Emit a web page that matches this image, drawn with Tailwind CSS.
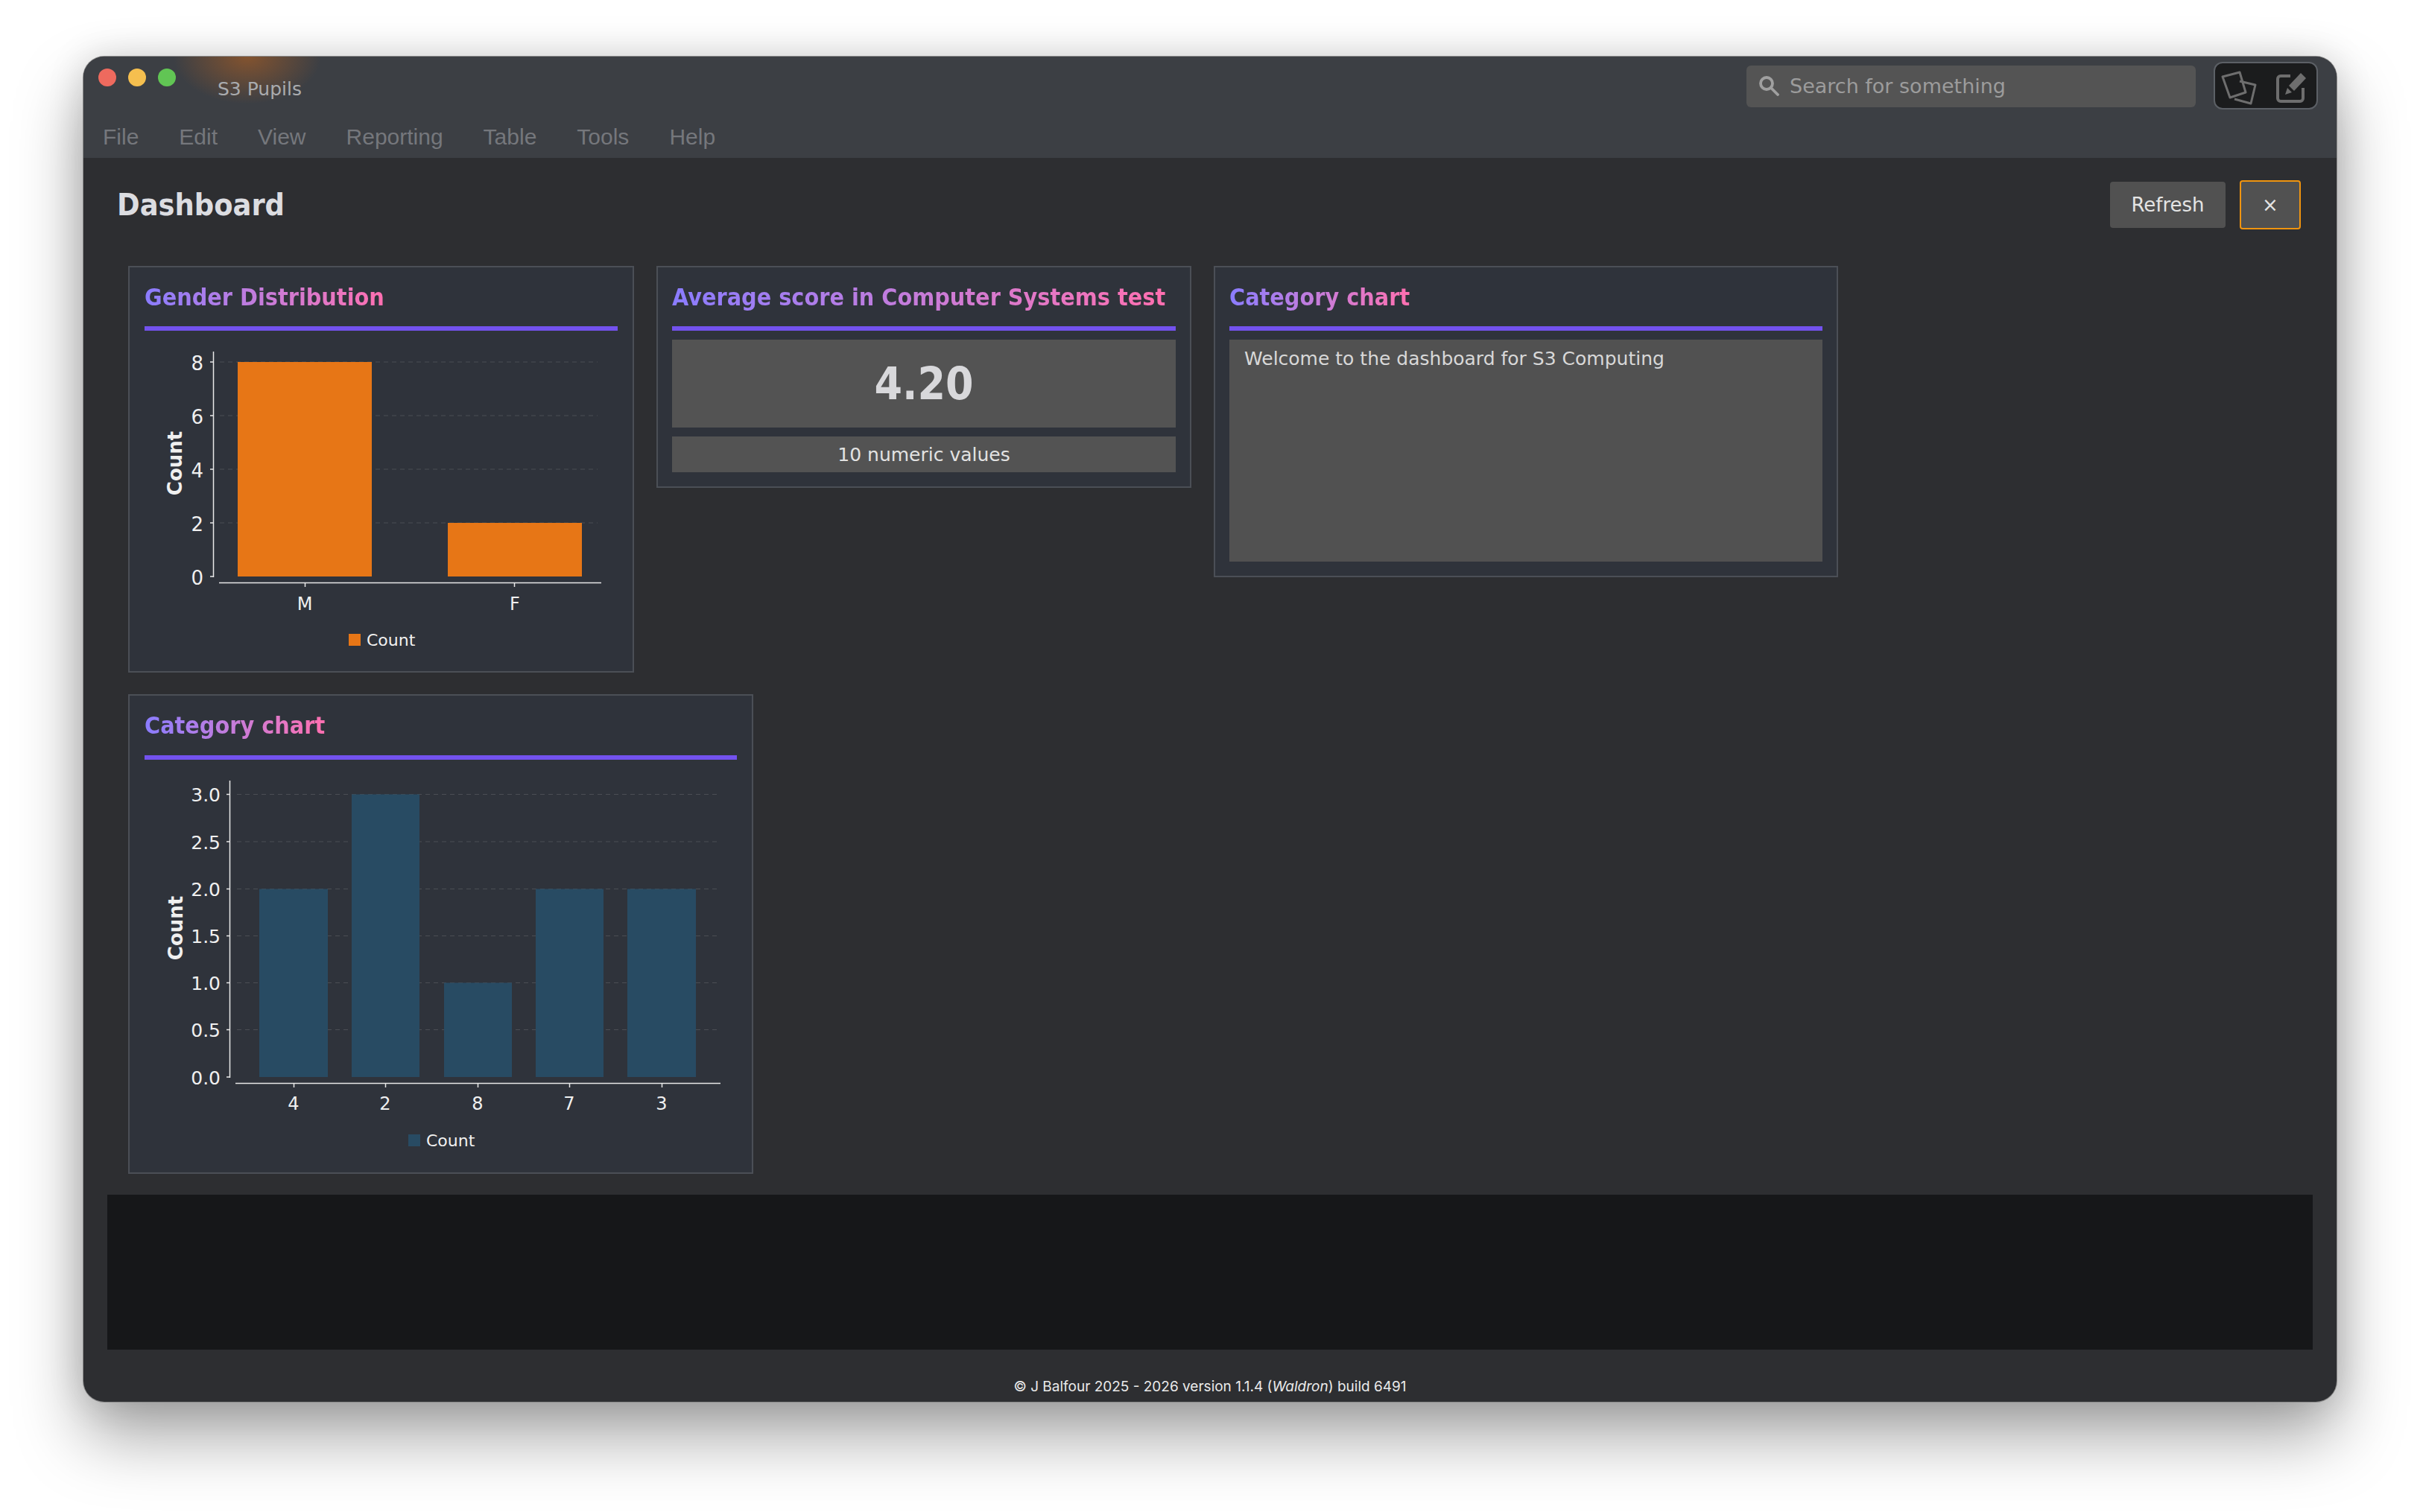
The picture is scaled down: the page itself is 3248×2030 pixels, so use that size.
<!DOCTYPE html>
<html lang="en">
<head>
  <meta charset="UTF-8">
  <title>S3 Pupils</title>
  <script src="https://cdn.jsdelivr.net/npm/@tailwindcss/browser@4"></script>
</head>
<body class="bg-white">
  <div class="h-[2030px] w-[3248px] overflow-hidden pl-[112px] pt-[76px] font-['DejaVu_Sans',sans-serif]">
    <div class="relative flex h-[1806px] w-[3024px] flex-col overflow-hidden rounded-[28px] bg-[#2d2e31] shadow-[0_0_0_1px_#8a8a8a,0_46px_90px_rgba(0,0,0,0.36),0_0_50px_rgba(0,0,0,0.14)]">

      <!-- Title bar and menu -->
      <div class="relative h-[136px] shrink-0 bg-[#3c3f44]">
        <div class="absolute left-[120px] top-0 h-[64px] w-[200px] bg-[radial-gradient(ellipse_at_50%_0%,rgba(190,100,30,0.55),rgba(190,100,30,0)_70%)]"></div>
        <div class="relative flex h-[72px] items-start">
          <div class="ml-[20px] mt-[16px] flex gap-[16px]">
            <div class="h-[24px] w-[24px] rounded-full bg-[#ee6a5e]"></div>
            <div class="h-[24px] w-[24px] rounded-full bg-[#f5bf4f]"></div>
            <div class="h-[24px] w-[24px] rounded-full bg-[#61c554]"></div>
          </div>
          <div class="ml-[56px] mt-[26px] text-[25px] leading-[36px] text-[#a9abae]">S3 Pupils</div>
          <div class="ml-auto mt-[12px] flex h-[56px] w-[603px] items-center gap-[14px] rounded-[6px] bg-[#545454] pl-[16px]">
            <svg class="-mt-[3px] h-[28px] w-[28px]" viewBox="0 0 28 28" fill="none" stroke="#a0a0a0" stroke-width="3.8">
              <circle cx="11" cy="11" r="8"/>
              <path d="M17 17l9 9" stroke-linecap="round"/>
            </svg>
            <span class="text-[27px] text-[#9c9c9c]">Search for something</span>
          </div>
          <div class="ml-[24px] mr-[25px] mt-[7px] flex h-[64px] w-[140px] items-center justify-between rounded-[12px] border-2 border-[#5c6066] bg-[#1b1c1d] pl-[8px] pr-[12px]">
            <svg class="h-[60px] w-[50px]" viewBox="0 0 50 60" fill="none" stroke="#6e6e6e" stroke-width="3" stroke-linejoin="round">
              <path d="M2 18l23-6 8 27-21 7z"/>
              <path d="M25 24l21 5-6 25-22-6"/>
            </svg>
            <svg class="h-[60px] w-[46px]" viewBox="0 0 46 60" fill="none" stroke="#6e6e6e" stroke-width="4" stroke-linejoin="round">
              <path d="M23 17H10a4 4 0 0 0-4 4v26a4 4 0 0 0 4 4h26a4 4 0 0 0 4-4V33"/>
              <path d="M37 13l7 7-16 17-7-7z" fill="#6e6e6e" stroke="none"/>
              <path d="M19 33l6 6-9 3z" fill="#6e6e6e" stroke="none"/>
            </svg>
          </div>
        </div>
        <nav class="relative ml-[26px] mt-[16px] flex gap-[54px] font-['Liberation_Sans',sans-serif] text-[30px] leading-[40px] text-[#75777c]">
          <span>File</span><span>Edit</span><span>View</span><span>Reporting</span><span>Table</span><span>Tools</span><span>Help</span>
        </nav>
      </div>

      <!-- Page header -->
      <div class="flex h-[126px] shrink-0 items-center justify-between pl-[45px] pr-[48px]">
        <h1 class="mt-[2px] text-[41px] font-bold font-stretch-condensed text-[#dcdde1]">Dashboard</h1>
        <div class="flex items-center gap-[19px]">
          <button class="h-[62px] w-[155px] rounded-[4px] bg-[#515151] text-[26px] text-[#e4e4e4]">Refresh</button>
          <button class="h-[66px] w-[82px] rounded-[4px] border-2 border-[#f0940f] bg-[#515151] text-[26px] text-[#e4e4e4]">×</button>
        </div>
      </div>

      <!-- Cards -->
      <div class="mt-[19px] flex flex-col gap-[29px] pl-[60px]">
        <div class="flex items-start gap-[30px]">
          <div class="h-[546px] w-[679px] border-2 border-[#4b4f56] bg-[#2f333b] px-[20px]">
            <h2 class="mt-[20px] h-[40px] whitespace-nowrap text-[32px] font-bold font-stretch-condensed leading-[40px]"><span class="bg-gradient-to-r from-[#8a7cff] to-[#ff6fb0] bg-clip-text text-transparent">Gender Distribution</span></h2>
            <div class="mt-[19px] h-[6px] bg-[#7352ee]"></div>
            <svg class="block" width="635" height="450" viewBox="194 444 635 450" font-size="26" fill="#f0f0f0">
              <path d="M295 486H802M295 558H802M295 630H802M295 702H802" stroke="#4b4e54" stroke-width="1" stroke-dasharray="6 5" fill="none"/>
              <g fill="#e77616">
                <rect x="319" y="486" width="180" height="288"/>
                <rect x="601" y="702" width="180" height="72"/>
              </g>
              <path d="M286.500 472V775M282 486H286M282 558H286M282 630H286M282 702H286M282 774H286M294 782.500H807M409.500 782V788M690.500 782V788" stroke="#e8e8e8" stroke-width="1.5" fill="none"/>
              <g text-anchor="end">
                <text x="273" y="497">8</text>
                <text x="273" y="569">6</text>
                <text x="273" y="641">4</text>
                <text x="273" y="713">2</text>
                <text x="273" y="785">0</text>
              </g>
              <g text-anchor="middle">
                <text x="409" y="819" font-size="24">M</text>
                <text x="691" y="819" font-size="24">F</text>
              </g>
              <text x="0" y="0" transform="translate(244 622) rotate(-90)" text-anchor="middle" font-size="26" font-weight="700">Count</text>
              <rect x="468" y="851" width="16" height="16" fill="#e77616"/>
              <text x="492" y="867" font-size="22">Count</text>
            </svg>
          </div>

          <div class="h-[298px] w-[718px] border-2 border-[#4b4f56] bg-[#2f333b] px-[19px]">
            <h2 class="mt-[20px] h-[40px] whitespace-nowrap text-[32px] font-bold font-stretch-condensed leading-[40px]"><span class="bg-gradient-to-r from-[#8a7cff] to-[#ff6fb0] bg-clip-text text-transparent">Average score in Computer Systems test</span></h2>
            <div class="mt-[19px] h-[6px] bg-[#7352ee]"></div>
            <div class="mt-[12px] flex h-[118px] items-center justify-center bg-[#535353] text-[60px] font-bold font-stretch-condensed text-[#d8d8db]">4.20</div>
            <div class="mt-[12px] flex h-[48px] items-center justify-center bg-[#535353] pt-[2px] text-[25px] text-[#e2e2e2]">10 numeric values</div>
          </div>

          <div class="h-[418px] w-[838px] border-2 border-[#4b4f56] bg-[#2f333b] px-[19px]">
            <h2 class="mt-[20px] h-[40px] whitespace-nowrap text-[32px] font-bold font-stretch-condensed leading-[40px]"><span class="bg-gradient-to-r from-[#8a7cff] to-[#ff6fb0] bg-clip-text text-transparent">Category chart</span></h2>
            <div class="mt-[19px] h-[6px] bg-[#7352ee]"></div>
            <div class="mt-[12px] h-[298px] bg-[#515151] px-[20px] pt-[8px] text-[25px] leading-[36px] text-[#d8d8d8]">Welcome to the dashboard for S3 Computing</div>
          </div>
        </div>

        <div class="h-[644px] w-[839px] border-2 border-[#4b4f56] bg-[#2f333b] px-[20px]">
          <h2 class="mt-[20px] h-[40px] whitespace-nowrap text-[32px] font-bold font-stretch-condensed leading-[40px]"><span class="bg-gradient-to-r from-[#8a7cff] to-[#ff6fb0] bg-clip-text text-transparent">Category chart</span></h2>
          <div class="mt-[20px] h-[6px] bg-[#7352ee]"></div>
          <svg class="block" width="795" height="540" viewBox="194 1020 795 540" font-size="25" fill="#f0f0f0">
            <path d="M318 1066.500H962M318 1130H962M318 1193.500H962M318 1256.500H962M318 1319.500H962M318 1382.500H962" stroke="#4b4e54" stroke-width="1" stroke-dasharray="6 5" fill="none"/>
            <g fill="#284b63">
              <rect x="348" y="1193.500" width="92" height="252.500"/>
              <rect x="472" y="1066.500" width="91" height="379.500"/>
              <rect x="596" y="1319.500" width="91" height="126.500"/>
              <rect x="719" y="1193.500" width="91" height="252.500"/>
              <rect x="842" y="1193.500" width="92" height="252.500"/>
            </g>
            <path d="M308.500 1048V1447M304 1066.500H308M304 1130H308M304 1193.500H308M304 1256.500H308M304 1319.500H308M304 1382.500H308M304 1446H308M316 1454.500H967M394.500 1454V1460M517.500 1454V1460M641.500 1454V1460M764.500 1454V1460M888.500 1454V1460" stroke="#e8e8e8" stroke-width="1.5" fill="none"/>
            <g text-anchor="end">
              <text x="296" y="1076">3.0</text>
              <text x="296" y="1140">2.5</text>
              <text x="296" y="1203">2.0</text>
              <text x="296" y="1266">1.5</text>
              <text x="296" y="1329">1.0</text>
              <text x="296" y="1392">0.5</text>
              <text x="296" y="1456">0.0</text>
            </g>
            <g text-anchor="middle" font-size="24">
              <text x="394" y="1490">4</text>
              <text x="517" y="1490">2</text>
              <text x="641" y="1490">8</text>
              <text x="764" y="1490">7</text>
              <text x="888" y="1490">3</text>
            </g>
            <text x="0" y="0" transform="translate(245 1246) rotate(-90)" text-anchor="middle" font-size="26" font-weight="700">Count</text>
            <rect x="548" y="1523" width="16" height="16" fill="#284b63"/>
            <text x="572" y="1539" font-size="22">Count</text>
          </svg>
        </div>
      </div>

      <!-- Output panel -->
      <div class="mx-[32px] mt-[28px] h-[208px] shrink-0 bg-[#161719]"></div>

      <!-- Footer -->
      <div class="flex h-[70px] items-end justify-center pb-[6px] font-['Inter',sans-serif] text-[19px] leading-[28px] text-[#eaeaea]">
        <span>© J Balfour 2025 - 2026 version 1.1.4 (<em>Waldron</em>) build 6491</span>
      </div>
    </div>
  </div>
</body>
</html>
